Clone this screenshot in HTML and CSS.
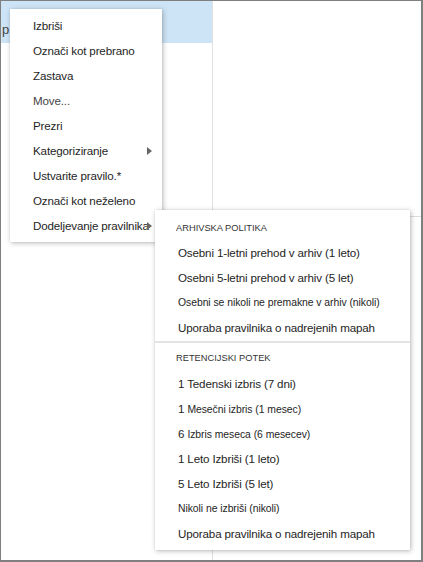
FILE: index.html
```html
<!DOCTYPE html>
<html lang="sl">
<head>
<meta charset="utf-8">
<link rel="stylesheet" href="styles.css">
</head>
<body>
<div class="frame">
  <div class="left-pane">
    <div class="row-selected"><span class="clip">p</span></div>
  </div>
  <div class="right-pane">
    <div class="right-top"></div>
  </div>

  <div class="menu main-menu">
    <div class="item">Izbriši</div>
    <div class="item">Označi kot prebrano</div>
    <div class="item">Zastava</div>
    <div class="item muted">Move...</div>
    <div class="item">Prezri</div>
    <div class="item has-sub">Kategoriziranje<span class="arrow"></span></div>
    <div class="item">Ustvarite pravilo.*</div>
    <div class="item">Označi kot neželeno</div>
    <div class="item has-sub">Dodeljevanje pravilnika<span class="arrow"></span></div>
  </div>

  <div class="menu sub-menu">
    <div class="section">
      <div class="header">ARHIVSKA POLITIKA</div>
      <div class="sitem">Osebni 1-letni prehod v arhiv (1 leto)</div>
      <div class="sitem">Osebni 5-letni prehod v arhiv (5 let)</div>
      <div class="sitem small">Osebni se nikoli ne premakne v arhiv (nikoli)</div>
      <div class="sitem">Uporaba pravilnika o nadrejenih mapah</div>
    </div>
    <div class="divider"></div>
    <div class="section">
      <div class="header second">RETENCIJSKI POTEK</div>
      <div class="sitem">1 Tedenski izbris (7 dni)</div>
      <div class="sitem">1 <span class="sm">Mesečni izbris (1 mesec)</span></div>
      <div class="sitem">6 <span class="sm">Izbris meseca (6 mesecev)</span></div>
      <div class="sitem">1 Leto Izbriši (1 leto)</div>
      <div class="sitem">5 Leto Izbriši (5 let)</div>
      <div class="sitem small">Nikoli ne izbriši (nikoli)</div>
      <div class="sitem">Uporaba pravilnika o nadrejenih mapah</div>
    </div>
  </div>
</div>
</body>
</html>
```

FILE: styles.css
```css
* { box-sizing: border-box; }
html, body {
  margin: 0;
  padding: 0;
  background: #ffffff;
}
body {
  font-family: "Liberation Sans", Arial, sans-serif;
  color: #1e1e1e;
}
.frame {
  position: relative;
  width: 423px;
  height: 562px;
  border-top: 1px solid #7f7f7f;
  border-left: 1px solid #7f7f7f;
  border-right: 2px solid #7f7f7f;
  border-bottom: 2px solid #7f7f7f;
  display: flex;
  overflow: hidden;
  background: #fff;
}
.left-pane {
  width: 212px;
  flex: none;
  border-right: 1px solid #e1e1e1;
}
.row-selected {
  height: 42px;
  background: #cde4f6;
  font-size: 13px;
  line-height: 14px;
  padding: 22px 0 0 1px;
  color: #444;
  white-space: nowrap;
  overflow: hidden;
}
.clip {
  display: inline-block;
  width: 8px;
  overflow: hidden;
}
.right-pane {
  flex: 1;
}
.right-top {
  height: 216px;
  border-bottom: 1px solid #dedede;
}

.menu {
  position: absolute;
  background: #fff;
  box-shadow: 1px 1px 5px rgba(0, 0, 0, 0.28), 0 0 1px rgba(0, 0, 0, 0.12);
}
.main-menu {
  left: 9px;
  top: 8px;
  width: 152px;
  height: 233px;
  padding-top: 4px;
}
.item {
  position: relative;
  height: 25px;
  line-height: 25px;
  padding-left: 23px;
  font-size: 11.6px;
  letter-spacing: -0.15px;
  white-space: nowrap;
  color: #1e1e1e;
}
.item.muted { color: #444; }
.arrow {
  position: absolute;
  left: 137px;
  top: 9px;
  width: 0;
  height: 0;
  border-top: 4px solid transparent;
  border-bottom: 4px solid transparent;
  border-left: 5px solid #666;
}

.sub-menu {
  left: 154px;
  top: 209px;
  width: 255px;
  height: 340px;
  padding-top: 8px;
}
.header {
  height: 22px;
  line-height: 20px;
  padding-left: 21px;
  font-size: 9.3px;
  color: #333;
}
.header.second {
  margin-top: 5px;
  height: 23px;
}
.sitem {
  height: 25px;
  line-height: 25px;
  padding-left: 23px;
  font-size: 11.6px;
  letter-spacing: -0.15px;
  white-space: nowrap;
  color: #1e1e1e;
}
.sitem.small { font-size: 10.4px; letter-spacing: -0.05px; }
.sm { font-size: 10.4px; letter-spacing: -0.05px; }
.divider {
  margin-top: 1px;
  height: 2px;
  background: #e4e4e4;
}
```
